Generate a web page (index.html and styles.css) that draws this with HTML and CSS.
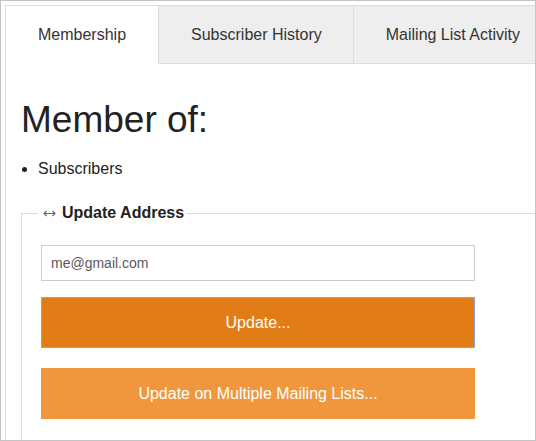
FILE: index.html
```html
<!DOCTYPE html>
<html>
<head>
<meta charset="utf-8">
<link rel="stylesheet" href="styles.css">
</head>
<body>
<div class="frame">
  <div class="tabs-box">
    <div class="tablist">
      <div class="tab active">Membership</div>
      <div class="tab">Subscriber History</div>
      <div class="tab">Mailing List Activity</div>
    </div>
    <div class="panel">
      <h1 class="title">Member of:</h1>
      <ul class="lists">
        <li>Subscribers</li>
      </ul>
      <fieldset class="box">
        <legend class="legend"><svg class="arrow" width="13" height="7" viewBox="0 0 13 7"><path d="M1 3.5H12M3.6 1L1 3.5L3.6 6M9.4 1L12 3.5L9.4 6" fill="none" stroke="#666" stroke-width="1.1"/></svg>Update Address</legend>
        <input class="email" type="text" placeholder="me@gmail.com">
        <button class="btn btn-primary" type="button">Update...</button>
        <button class="btn btn-secondary" type="button">Update on Multiple Mailing Lists...</button>
      </fieldset>
    </div>
  </div>
</div>
</body>
</html>
```

FILE: styles.css
```css
html, body {
  margin: 0;
  padding: 0;
  overflow: hidden;
  background: #fff;
}

body {
  font-family: "Liberation Sans", Arial, sans-serif;
  font-size: 16px;
  color: #222;
}

.frame {
  box-sizing: border-box;
  width: 536px;
  height: 441px;
  border: 1px solid #c4c4c4;
  padding: 4px 0 0 4px;
  overflow: hidden;
}

.tabs-box {
  width: 640px;
  height: 100%;
  border-left: 1px solid #dddddd;
}

.tablist {
  display: flex;
  border-top: 1px solid #dddddd;
}

.tab {
  padding: 19px 32px;
  line-height: 19px;
  font-size: 16px;
  color: #333;
  background: #eeeeee;
  border-right: 1px solid #dddddd;
  border-bottom: 1px solid #dddddd;
  white-space: nowrap;
}

.tab + .tab {
  padding: 19px 31px 19px 32px;
}

.tab.active {
  background: #fff;
  border-bottom-color: #fff;
}

.panel {
  padding: 0 0 0 15px;
}

.title {
  margin: 35px 0 0;
  font-size: 37px;
  line-height: 42px;
  font-weight: normal;
  color: #222;
}

.lists {
  margin: 19px 0 0;
  padding-left: 17px;
  line-height: 18px;
  font-size: 16px;
  color: #222;
}

.box {
  margin: 25px 0 0;
  border: 1px solid #dddddd;
  padding: 22px 0 30px 19px;
  width: 560px;
}

.legend {
  margin-left: -3px;
  padding: 0 2px;
  font-weight: bold;
  font-size: 16px;
  line-height: 20px;
  color: #222;
}

.arrow {
  margin: 0 6px 0 3px;
  vertical-align: middle;
}

.email {
  display: block;
  box-sizing: border-box;
  width: 434px;
  height: 36px;
  margin: 0;
  border: 1px solid #cccccc;
  padding: 0 9px;
  font-family: "Liberation Sans", Arial, sans-serif;
  font-size: 14px;
  color: #333;
  outline: none;
}

.email::placeholder {
  color: #5a5a5a;
}

.btn {
  display: block;
  box-sizing: border-box;
  width: 434px;
  height: 51px;
  border: none;
  padding: 0;
  font-family: "Liberation Sans", Arial, sans-serif;
  font-size: 16px;
  color: #fff;
}

.btn-primary {
  margin-top: 16px;
  background: #e27c16;
  border: 1px solid #8fa6d6;
}

.btn-secondary {
  margin-top: 20px;
  background: #f0973d;
}
```
